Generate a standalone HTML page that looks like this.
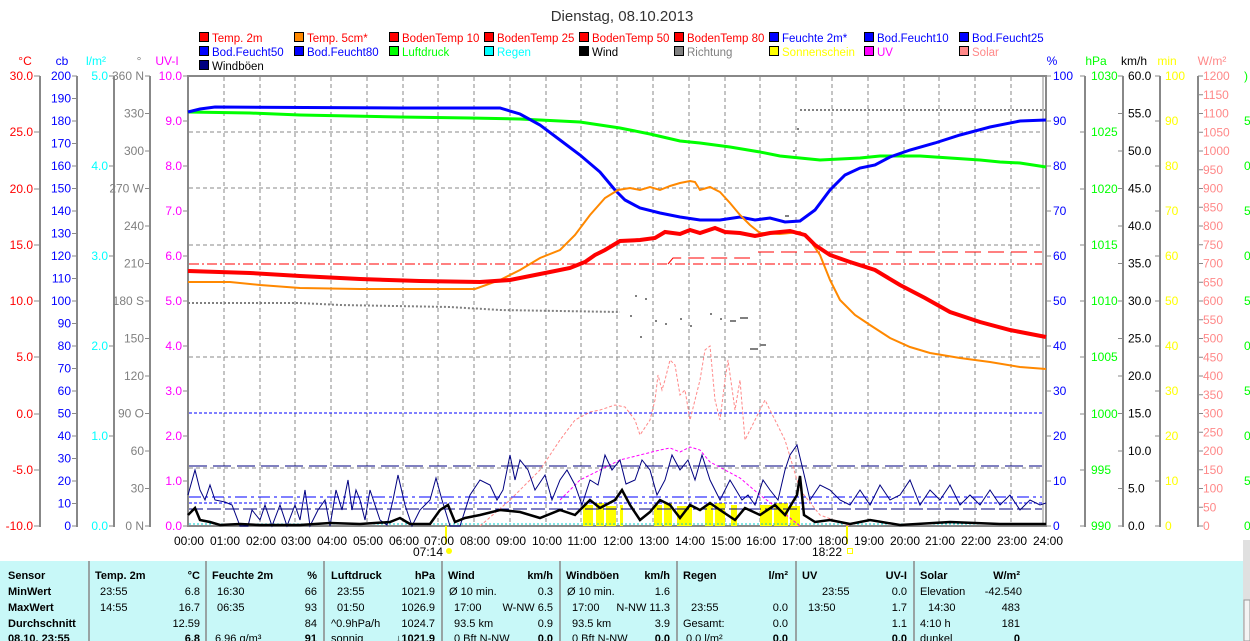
<!DOCTYPE html>
<html><head><meta charset="utf-8"><style>
body{margin:0;background:#fff;width:1250px;height:641px;overflow:hidden}
svg{display:block}
text{font-family:"Liberation Sans",sans-serif;font-size:12px}
.lg text{font-size:11.5px}
.t{font-size:11px}
</style></head><body>
<svg width="1250" height="641" viewBox="0 0 1250 641">
<text x="622" y="21" text-anchor="middle" fill="#333" style="font-size:15px">Dienstag, 08.10.2013</text>
<!-- legend -->
<g stroke="#000" stroke-width="1">
<rect x="199.5" y="32.5" width="9" height="9" fill="#f00"/><rect x="294.5" y="32.5" width="9" height="9" fill="#f80"/><rect x="389.5" y="32.5" width="9" height="9" fill="#f00"/><rect x="484.5" y="32.5" width="9" height="9" fill="#f00"/><rect x="579.5" y="32.5" width="9" height="9" fill="#f00"/><rect x="674.5" y="32.5" width="9" height="9" fill="#f00"/><rect x="769.5" y="32.5" width="9" height="9" fill="#00f"/><rect x="864.5" y="32.5" width="9" height="9" fill="#00f"/><rect x="959.5" y="32.5" width="9" height="9" fill="#00f"/>
<rect x="199.5" y="46.5" width="9" height="9" fill="#00f"/><rect x="294.5" y="46.5" width="9" height="9" fill="#00f"/><rect x="389.5" y="46.5" width="9" height="9" fill="#0f0"/><rect x="484.5" y="46.5" width="9" height="9" fill="#0ff"/><rect x="579.5" y="46.5" width="9" height="9" fill="#000"/><rect x="674.5" y="46.5" width="9" height="9" fill="#808080"/><rect x="769.5" y="46.5" width="9" height="9" fill="#ff0"/><rect x="864.5" y="46.5" width="9" height="9" fill="#f0f"/><rect x="959.5" y="46.5" width="9" height="9" fill="#f88"/>
<rect x="199.5" y="60.5" width="9" height="9" fill="#000080"/>
</g>
<g class="lg">
<text x="212" y="42" fill="#f00">Temp. 2m</text><text x="307" y="42" fill="#f00">Temp. 5cm*</text><text x="402" y="42" fill="#f00">BodenTemp 10</text><text x="497" y="42" fill="#f00">BodenTemp 25</text><text x="592" y="42" fill="#f00">BodenTemp 50</text><text x="687" y="42" fill="#f00">BodenTemp 80</text><text x="782" y="42" fill="#00f">Feuchte 2m*</text><text x="877" y="42" fill="#00f">Bod.Feucht10</text><text x="972" y="42" fill="#00f">Bod.Feucht25</text>
<text x="212" y="56" fill="#00f">Bod.Feucht50</text><text x="307" y="56" fill="#00f">Bod.Feucht80</text><text x="402" y="56" fill="#0f0">Luftdruck</text><text x="497" y="56" fill="#0ff">Regen</text><text x="592" y="56" fill="#000">Wind</text><text x="687" y="56" fill="#808080">Richtung</text><text x="782" y="56" fill="#ff0">Sonnenschein</text><text x="877" y="56" fill="#f0f">UV</text><text x="972" y="56" fill="#f88">Solar</text>
<text x="212" y="70" fill="#000">Windböen</text>
</g>
<!-- axis titles -->
<text x="25" y="65" fill="#f00" text-anchor="middle">°C</text>
<text x="62" y="65" fill="#00f" text-anchor="middle">cb</text>
<text x="96" y="65" fill="#0ff" text-anchor="middle">l/m²</text>
<text x="139" y="65" fill="#808080" text-anchor="middle">°</text>
<text x="167" y="65" fill="#f0f" text-anchor="middle">UV-I</text>
<text x="1052" y="65" fill="#00f" text-anchor="middle">%</text>
<text x="1096" y="65" fill="#0f0" text-anchor="middle">hPa</text>
<text x="1134" y="65" fill="#000" text-anchor="middle">km/h</text>
<text x="1167" y="65" fill="#ff0" text-anchor="middle">min</text>
<text x="1212" y="65" fill="#f88" text-anchor="middle">W/m²</text>
<!-- axis lines -->
<g stroke="#888" stroke-width="2">
<line x1="40" y1="76" x2="40" y2="527"/><line x1="77" y1="76" x2="77" y2="527"/><line x1="114" y1="76" x2="114" y2="527"/><line x1="150" y1="76" x2="150" y2="527"/>
<line x1="1085" y1="76" x2="1085" y2="527"/><line x1="1123" y1="76" x2="1123" y2="527"/><line x1="1160" y1="76" x2="1160" y2="527"/><line x1="1198" y1="76" x2="1198" y2="527"/>
</g>
<!-- plot -->
<rect x="188" y="76" width="858" height="450" fill="#fff" stroke="#888" stroke-width="2"/>
<line x1="1043" y1="76" x2="1043" y2="526" stroke="#888" stroke-width="1"/>
<g stroke="#888" stroke-width="1" stroke-dasharray="4,3">
<path d="M224 77V525M260 77V525M295 77V525M331 77V525M367 77V525M403 77V525M438 77V525M474 77V525M510 77V525M546 77V525M581 77V525M617 77V525M653 77V525M689 77V525M725 77V525M760 77V525M796 77V525M832 77V525M868 77V525M904 77V525M939 77V525M975 77V525M1011 77V525"/>
<path d="M189 132H1042M189 188H1042M189 245H1042M189 357H1042M189 468H1042"/>
</g>
<!-- ticks -->
<g stroke="#888" stroke-width="1">
<path d="M34 76h6M34 132h6M34 189h6M34 245h6M34 301h6M34 357h6M34 414h6M34 470h6M34 526h6"/>
<path d="M72 76h5M72 98.5h5M72 121h5M72 143.5h5M72 166h5M72 188.5h5M72 211h5M72 233.5h5M72 256h5M72 278.5h5M72 301h5M72 323.5h5M72 346h5M72 368.5h5M72 391h5M72 413.5h5M72 436h5M72 458.5h5M72 481h5M72 503.5h5M72 526h5"/>
<path d="M109 76h5M109 166h5M109 256h5M109 346h5M109 436h5M109 526h5"/>
<path d="M145 76h5M145 113.5h5M145 151h5M145 188.5h5M145 226h5M145 263.5h5M145 301h5M145 338.5h5M145 376h5M145 413.5h5M145 451h5M145 488.5h5M145 526h5"/>
<path d="M183 76h5M183 121h5M183 166h5M183 211h5M183 256h5M183 301h5M183 346h5M183 391h5M183 436h5M183 481h5M183 526h5"/>
<path d="M1046 76h5M1046 121h5M1046 166h5M1046 211h5M1046 256h5M1046 301h5M1046 346h5M1046 391h5M1046 436h5M1046 481h5M1046 526h5"/>
<path d="M1080 76h5M1080 132h5M1080 189h5M1080 245h5M1080 301h5M1080 357h5M1080 414h5M1080 470h5M1080 526h5"/>
<path d="M1118 76h5M1118 113.5h5M1118 151h5M1118 188.5h5M1118 226h5M1118 263.5h5M1118 301h5M1118 338.5h5M1118 376h5M1118 413.5h5M1118 451h5M1118 488.5h5M1118 526h5"/>
<path d="M1155 76h5M1155 121h5M1155 166h5M1155 211h5M1155 256h5M1155 301h5M1155 346h5M1155 391h5M1155 436h5M1155 481h5M1155 526h5"/>
<path d="M1198 76h5M1198 94.75h5M1198 113.5h5M1198 132.25h5M1198 151h5M1198 169.75h5M1198 188.5h5M1198 207.25h5M1198 226h5M1198 244.75h5M1198 263.5h5M1198 282.25h5M1198 301h5M1198 319.75h5M1198 338.5h5M1198 357.25h5M1198 376h5M1198 394.75h5M1198 413.5h5M1198 432.25h5M1198 451h5M1198 469.75h5M1198 488.5h5M1198 507.25h5M1198 526h5"/>
</g>
<g fill="#f00" text-anchor="end">
<text x="33" y="80">30.0</text><text x="33" y="136">25.0</text><text x="33" y="193">20.0</text><text x="33" y="249">15.0</text><text x="33" y="305">10.0</text><text x="33" y="361">5.0</text><text x="33" y="418">0.0</text><text x="33" y="474">-5.0</text><text x="33" y="530">-10.0</text>
</g>
<g fill="#00f" text-anchor="end">
<text x="71" y="80">200</text><text x="71" y="102.5">190</text><text x="71" y="125">180</text><text x="71" y="147.5">170</text><text x="71" y="170">160</text><text x="71" y="192.5">150</text><text x="71" y="215">140</text><text x="71" y="237.5">130</text><text x="71" y="260">120</text><text x="71" y="282.5">110</text><text x="71" y="305">100</text><text x="71" y="327.5">90</text><text x="71" y="350">80</text><text x="71" y="372.5">70</text><text x="71" y="395">60</text><text x="71" y="417.5">50</text><text x="71" y="440">40</text><text x="71" y="462.5">30</text><text x="71" y="485">20</text><text x="71" y="507.5">10</text><text x="71" y="530">0</text>
</g>
<g fill="#0ff" text-anchor="end">
<text x="108" y="80">5.0</text><text x="108" y="170">4.0</text><text x="108" y="260">3.0</text><text x="108" y="350">2.0</text><text x="108" y="440">1.0</text><text x="108" y="530">0.0</text>
</g>
<g fill="#808080" text-anchor="end">
<text x="144" y="80">360 N</text><text x="144" y="117.5">330</text><text x="144" y="155">300</text><text x="144" y="192.5">270 W</text><text x="144" y="230">240</text><text x="144" y="267.5">210</text><text x="144" y="305">180 S</text><text x="144" y="342.5">150</text><text x="144" y="380">120</text><text x="144" y="417.5">90 O</text><text x="144" y="455">60</text><text x="144" y="492.5">30</text><text x="144" y="530">0 N</text>
</g>
<g fill="#f0f" text-anchor="end">
<text x="182" y="80">10.0</text><text x="182" y="125">9.0</text><text x="182" y="170">8.0</text><text x="182" y="215">7.0</text><text x="182" y="260">6.0</text><text x="182" y="305">5.0</text><text x="182" y="350">4.0</text><text x="182" y="395">3.0</text><text x="182" y="440">2.0</text><text x="182" y="485">1.0</text><text x="182" y="530">0.0</text>
</g>
<g fill="#00f">
<text x="1053" y="80">100</text><text x="1053" y="125">90</text><text x="1053" y="170">80</text><text x="1053" y="215">70</text><text x="1053" y="260">60</text><text x="1053" y="305">50</text><text x="1053" y="350">40</text><text x="1053" y="395">30</text><text x="1053" y="440">20</text><text x="1053" y="485">10</text><text x="1053" y="530">0</text>
</g>
<g fill="#0f0">
<text x="1091" y="80">1030</text><text x="1091" y="136">1025</text><text x="1091" y="193">1020</text><text x="1091" y="249">1015</text><text x="1091" y="305">1010</text><text x="1091" y="361">1005</text><text x="1091" y="418">1000</text><text x="1091" y="474">995</text><text x="1091" y="530">990</text>
<text x="1244" y="80">)</text><text x="1244" y="125">5</text><text x="1244" y="170">0</text><text x="1244" y="215">5</text><text x="1244" y="260">0</text><text x="1244" y="305">5</text><text x="1244" y="350">0</text><text x="1244" y="395">5</text><text x="1244" y="440">0</text><text x="1244" y="485">5</text><text x="1244" y="530">0</text>
</g>
<g fill="#000">
<text x="1128" y="80">60.0</text><text x="1128" y="117.5">55.0</text><text x="1128" y="155">50.0</text><text x="1128" y="192.5">45.0</text><text x="1128" y="230">40.0</text><text x="1128" y="267.5">35.0</text><text x="1128" y="305">30.0</text><text x="1128" y="342.5">25.0</text><text x="1128" y="380">20.0</text><text x="1128" y="417.5">15.0</text><text x="1128" y="455">10.0</text><text x="1128" y="492.5">5.0</text><text x="1128" y="530">0.0</text>
</g>
<g fill="#ff0">
<text x="1165" y="80">100</text><text x="1165" y="125">90</text><text x="1165" y="170">80</text><text x="1165" y="215">70</text><text x="1165" y="260">60</text><text x="1165" y="305">50</text><text x="1165" y="350">40</text><text x="1165" y="395">30</text><text x="1165" y="440">20</text><text x="1165" y="485">10</text><text x="1165" y="530">0</text>
</g>
<g fill="#f88">
<text x="1203" y="80">1200</text><text x="1203" y="98.75">1150</text><text x="1203" y="117.5">1100</text><text x="1203" y="136.25">1050</text><text x="1203" y="155">1000</text><text x="1203" y="173.75">950</text><text x="1203" y="192.5">900</text><text x="1203" y="211.25">850</text><text x="1203" y="230">800</text><text x="1203" y="248.75">750</text><text x="1203" y="267.5">700</text><text x="1203" y="286.25">650</text><text x="1203" y="305">600</text><text x="1203" y="323.75">550</text><text x="1203" y="342.5">500</text><text x="1203" y="361.25">450</text><text x="1203" y="380">400</text><text x="1203" y="398.75">350</text><text x="1203" y="417.5">300</text><text x="1203" y="436.25">250</text><text x="1203" y="455">200</text><text x="1203" y="473.75">150</text><text x="1203" y="492.5">100</text><text x="1203" y="511.25">50</text><text x="1203" y="530">0</text>
</g>
<!-- sunshine bars -->
<g fill="#ff0">
<path d="M583 505h10v21h-10zM596 503h8v23h-8zM606 506h10v20h-10zM620 505h3v21h-3zM654 505h8v21h-8zM664 503h8v23h-8zM677 506h15v20h-15zM705 505h8v21h-8zM715 503h10v23h-10zM731 505h6v21h-6zM760 505h12v21h-12zM774 503h14v23h-14zM790 506h10v20h-10z"/>
<rect x="445" y="526" width="2" height="18"/><rect x="846" y="526" width="2" height="18"/>
</g>
<line x1="189" y1="413" x2="1042" y2="413" stroke="#00f" stroke-dasharray="3,2"/>
<line x1="189" y1="466" x2="1042" y2="466" stroke="#000080" stroke-dasharray="18,6"/>
<line x1="189" y1="497" x2="1042" y2="497" stroke="#00f" stroke-dasharray="12,4,3,4"/>
<line x1="189" y1="503" x2="1042" y2="503" stroke="#00f" stroke-dasharray="3,2"/>
<line x1="189" y1="509" x2="1042" y2="509" stroke="#000080" stroke-dasharray="14,4"/>
<line x1="189" y1="524" x2="1042" y2="524" stroke="#0cc" stroke-dasharray="2,2"/>
<line x1="189" y1="264" x2="1042" y2="264" stroke="#f00" stroke-dasharray="10,3,2,3"/>
<path d="M668 264L673 258H750M758 252H1042" stroke="#f00" fill="none" stroke-dasharray="16,7"/>
<polyline fill="none" stroke="#f88" stroke-dasharray="3,2" points="480,526 510,500 540,470 560,440 575,420 590,412 600,410 615,405 625,407 635,420 640,435 650,420 655,400 658,375 662,390 665,380 670,360 675,365 680,395 685,390 690,420 695,400 700,380 705,350 710,346 715,400 720,420 725,380 728,360 735,410 740,380 745,440 750,430 755,420 765,400 775,420 785,440 800,490 820,515 850,526"/>
<polyline fill="none" stroke="#f0f" stroke-dasharray="3,2" points="560,500 580,480 600,470 620,460 640,455 660,450 670,448 680,452 690,447 700,450 710,462 725,470 740,478 760,495 780,510 800,526"/>
<polyline fill="none" stroke="#808080" stroke-width="2" stroke-dasharray="2,2" points="188,303 300,303 340,305 450,307 500,310 620,312"/>
<polyline fill="none" stroke="#808080" stroke-width="2" stroke-dasharray="2,2" points="800,110 1046,110"/>
<g fill="#808080"><rect x="635" y="295" width="2" height="2"/><rect x="645" y="298" width="2" height="2"/><rect x="630" y="315" width="2" height="2"/><rect x="655" y="320" width="2" height="2"/><rect x="665" y="323" width="2" height="2"/><rect x="680" y="318" width="2" height="2"/><rect x="690" y="325" width="2" height="2"/><rect x="710" y="313" width="2" height="2"/><rect x="720" y="318" width="2" height="2"/><rect x="730" y="320" width="6" height="2"/><rect x="740" y="317" width="8" height="2"/><rect x="750" y="348" width="8" height="2"/><rect x="760" y="344" width="6" height="2"/><rect x="785" y="215" width="4" height="2"/><rect x="797" y="128" width="2" height="2"/><rect x="793" y="150" width="2" height="2"/><rect x="640" y="336" width="2" height="2"/></g>
<polyline fill="none" stroke="#0f0" stroke-width="3" points="188,112 250,113 300,115 400,117 470,118 520,119 560,121 580,122 600,125 620,128 650,134 680,141 700,143 730,147 760,152 780,156 800,158 820,160 840,159 860,158 880,156 920,156 950,158 980,160 1000,162 1020,163 1046,167"/>
<polyline fill="none" stroke="#00f" stroke-width="3" points="188,112 200,109 215,107 400,108 500,108 520,114 540,125 560,140 580,155 600,172 615,190 625,200 640,208 660,213 680,217 700,220 720,220 740,217 755,220 770,218 785,222 800,221 815,210 830,190 845,175 860,168 875,165 890,157 910,150 935,143 960,135 990,127 1020,121 1046,120"/>
<polyline fill="none" stroke="#f80" stroke-width="2" points="188,282 230,282 260,285 300,288 360,289 475,289 500,280 520,270 540,258 560,250 575,235 590,215 605,198 618,190 630,188 640,190 650,187 660,190 670,186 680,183 690,181 695,182 700,190 710,187 720,192 730,203 740,215 750,225 760,233 780,234 800,232 810,240 820,255 830,280 840,300 855,315 870,325 890,338 910,347 930,353 960,358 990,362 1020,367 1046,369"/>
<polyline fill="none" stroke="#f00" stroke-width="4" points="188,271 250,273 300,276 360,279 420,281 480,282 510,280 530,276 550,272 570,268 585,262 595,255 605,250 620,241 640,240 655,238 665,232 680,234 690,230 700,233 715,228 725,232 740,233 755,236 770,233 790,231 805,235 815,245 830,255 850,262 875,270 900,285 925,298 950,312 980,322 1010,330 1046,337"/>
<polyline fill="none" stroke="#000080" stroke-width="1" points="188,495 195,470 200,490 205,500 210,485 215,500 225,502 232,505 240,526 248,526 252,510 260,520 265,505 272,526 280,505 287,526 295,505 300,520 305,490 310,526 318,510 325,500 330,526 336,490 342,510 348,480 352,510 356,490 360,500 365,520 370,490 375,505 380,520 387,525 393,500 398,475 405,505 412,526 420,510 430,500 436,478 442,500 450,526 460,526 470,495 480,480 490,485 497,500 503,490 510,455 515,480 520,460 528,470 535,490 545,475 552,500 560,480 567,470 575,485 582,505 590,480 598,485 605,455 612,470 620,460 626,484 635,480 642,460 650,470 657,495 665,480 672,455 680,470 688,460 695,480 702,455 710,480 720,500 730,480 742,500 748,495 755,505 763,480 770,490 778,500 785,470 790,455 797,445 803,470 810,500 820,485 830,490 840,500 850,505 860,490 870,505 880,485 890,500 900,495 910,480 920,505 930,490 940,500 950,485 960,505 970,495 980,505 990,490 1000,505 1010,495 1020,510 1030,500 1040,505 1046,503"/>
<polyline fill="none" stroke="#000" stroke-width="2.5" points="188,515 195,508 200,520 210,522 220,525 240,524 260,525 300,525 330,523 360,524 390,522 400,518 410,524 430,524 440,510 448,505 455,522 465,518 480,515 500,510 520,512 540,518 560,510 575,515 590,500 600,508 615,500 622,490 630,505 640,520 650,512 660,500 670,505 680,518 690,505 700,510 710,503 720,510 735,520 745,508 760,515 775,505 785,515 797,495 800,476 804,515 815,522 830,520 850,524 870,520 900,525 950,522 1000,524 1046,524"/>
<g fill="#000" text-anchor="middle">
<text x="189" y="545">00:00</text><text x="225" y="545">01:00</text><text x="261" y="545">02:00</text><text x="296" y="545">03:00</text><text x="332" y="545">04:00</text><text x="368" y="545">05:00</text><text x="404" y="545">06:00</text><text x="439" y="545">07:00</text><text x="475" y="545">08:00</text><text x="511" y="545">09:00</text><text x="547" y="545">10:00</text><text x="582" y="545">11:00</text><text x="618" y="545">12:00</text><text x="654" y="545">13:00</text><text x="690" y="545">14:00</text><text x="726" y="545">15:00</text><text x="761" y="545">16:00</text><text x="797" y="545">17:00</text><text x="833" y="545">18:00</text><text x="869" y="545">19:00</text><text x="905" y="545">20:00</text><text x="940" y="545">21:00</text><text x="976" y="545">22:00</text><text x="1012" y="545">23:00</text><text x="1048" y="545">24:00</text>
<text x="428" y="556">07:14</text><text x="827" y="556">18:22</text>
</g>
<circle cx="449" cy="551" r="3" fill="#ff0"/>
<rect x="847.5" y="548.5" width="5" height="5" fill="none" stroke="#ff0"/>
<rect x="0" y="561" width="1243" height="80" fill="#c8f8f8"/>
<rect x="1243" y="540" width="7" height="101" fill="#e0e0e0"/>
<rect x="1244" y="600" width="6" height="41" fill="#f4f4f4" stroke="#999"/>
<g stroke="#888" stroke-width="1.5"><path d="M89 561V641M206 561V641M324 561V641M442 561V641M560 561V641M677 561V641M796 561V641M914 561V641"/></g>
<g fill="#000">
<text class="t" x="8" y="579" font-weight="bold">Sensor</text><text class="t" x="8" y="611" font-weight="bold">MaxWert</text><text class="t" x="8" y="595" font-weight="bold">MinWert</text><text class="t" x="8" y="627" font-weight="bold">Durchschnitt</text><text class="t" x="8" y="642" font-weight="bold">08.10. 23:55</text>
<text class="t" x="95" y="579" font-weight="bold">Temp. 2m</text><text class="t" x="200" y="579" font-weight="bold" text-anchor="end">°C</text>
<text class="t" x="212" y="579" font-weight="bold">Feuchte 2m</text><text class="t" x="317" y="579" font-weight="bold" text-anchor="end">%</text>
<text class="t" x="331" y="579" font-weight="bold">Luftdruck</text><text class="t" x="435" y="579" font-weight="bold" text-anchor="end">hPa</text>
<text class="t" x="448" y="579" font-weight="bold">Wind</text><text class="t" x="553" y="579" font-weight="bold" text-anchor="end">km/h</text>
<text class="t" x="566" y="579" font-weight="bold">Windböen</text><text class="t" x="670" y="579" font-weight="bold" text-anchor="end">km/h</text>
<text class="t" x="683" y="579" font-weight="bold">Regen</text><text class="t" x="788" y="579" font-weight="bold" text-anchor="end">l/m²</text>
<text class="t" x="802" y="579" font-weight="bold">UV</text><text class="t" x="907" y="579" font-weight="bold" text-anchor="end">UV-I</text>
<text class="t" x="920" y="579" font-weight="bold">Solar</text><text class="t" x="1020" y="579" font-weight="bold" text-anchor="end">W/m²</text>
<text class="t" x="200" y="642" font-weight="bold" text-anchor="end">6.8</text><text class="t" x="317" y="642" font-weight="bold" text-anchor="end">91</text><text class="t" x="435" y="642" font-weight="bold" text-anchor="end">↓1021.9</text><text class="t" x="553" y="642" font-weight="bold" text-anchor="end">0.0</text><text class="t" x="670" y="642" font-weight="bold" text-anchor="end">0.0</text><text class="t" x="788" y="642" font-weight="bold" text-anchor="end">0.0</text><text class="t" x="907" y="642" font-weight="bold" text-anchor="end">0.0</text><text class="t" x="1020" y="642" font-weight="bold" text-anchor="end">0</text>
<text class="t" x="100" y="595">23:55</text><text class="t" x="200" y="595" text-anchor="end">6.8</text><text class="t" x="217" y="595">16:30</text><text class="t" x="317" y="595" text-anchor="end">66</text><text class="t" x="337" y="595">23:55</text><text class="t" x="435" y="595" text-anchor="end">1021.9</text><text class="t" x="449" y="595">Ø 10 min.</text><text class="t" x="553" y="595" text-anchor="end">0.3</text><text class="t" x="567" y="595">Ø 10 min.</text><text class="t" x="670" y="595" text-anchor="end">1.6</text><text class="t" x="822" y="595">23:55</text><text class="t" x="907" y="595" text-anchor="end">0.0</text><text class="t" x="920" y="595">Elevation</text><text class="t" x="1022" y="595" text-anchor="end">-42.540</text>
<text class="t" x="100" y="611">14:55</text><text class="t" x="200" y="611" text-anchor="end">16.7</text><text class="t" x="217" y="611">06:35</text><text class="t" x="317" y="611" text-anchor="end">93</text><text class="t" x="337" y="611">01:50</text><text class="t" x="435" y="611" text-anchor="end">1026.9</text><text class="t" x="454" y="611">17:00</text><text class="t" x="553" y="611" text-anchor="end">W-NW 6.5</text><text class="t" x="572" y="611">17:00</text><text class="t" x="670" y="611" text-anchor="end">N-NW 11.3</text><text class="t" x="691" y="611">23:55</text><text class="t" x="788" y="611" text-anchor="end">0.0</text><text class="t" x="808" y="611">13:50</text><text class="t" x="907" y="611" text-anchor="end">1.7</text><text class="t" x="928" y="611">14:30</text><text class="t" x="1020" y="611" text-anchor="end">483</text>
<text class="t" x="200" y="627" text-anchor="end">12.59</text><text class="t" x="317" y="627" text-anchor="end">84</text><text class="t" x="331" y="627">^0.9hPa/h</text><text class="t" x="435" y="627" text-anchor="end">1024.7</text><text class="t" x="454" y="627">93.5 km</text><text class="t" x="553" y="627" text-anchor="end">0.9</text><text class="t" x="572" y="627">93.5 km</text><text class="t" x="670" y="627" text-anchor="end">3.9</text><text class="t" x="683" y="627">Gesamt:</text><text class="t" x="788" y="627" text-anchor="end">0.0</text><text class="t" x="907" y="627" text-anchor="end">1.1</text><text class="t" x="920" y="627">4:10 h</text><text class="t" x="1020" y="627" text-anchor="end">181</text>
<text class="t" x="215" y="642">6.96 g/m³</text><text class="t" x="331" y="642">sonnig</text><text class="t" x="454" y="642">0 Bft N-NW</text><text class="t" x="572" y="642">0 Bft N-NW</text><text class="t" x="686" y="642">0.0 l/m²</text><text class="t" x="920" y="642">dunkel</text>
</g>
</svg>
</body></html>
